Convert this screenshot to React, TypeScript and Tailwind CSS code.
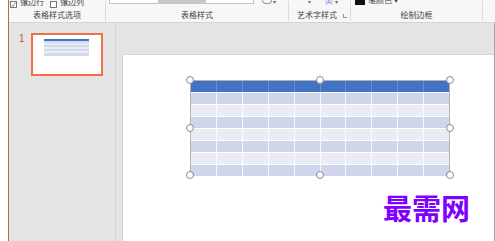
import React from "react";

const cols = Array.from({ length: 10 });
const rows = Array.from({ length: 7 });

function Handle({ className }: { className: string }) {
  return (
    <span
      className={`absolute w-[8px] h-[8px] rounded-full bg-white border border-[#8a8a8a] ${className}`}
    />
  );
}

export default function App() {
  return (
    <div
      className="w-[495px] h-[241px] overflow-hidden bg-white flex"
      style={{ fontFamily: '"Noto Sans CJK SC", "Noto Sans", sans-serif' }}
    >
      {/* left white strip */}
      <div className="w-[9px] h-full bg-white border-r border-[#c9604a]" />

      <div className="flex-1 flex flex-col">
        {/* ribbon */}
        <div className="h-[23px] bg-[#f7f7f7] border-b border-[#d4d4d4] flex text-[#444] text-[8px] overflow-hidden">
          <div className="w-[97px] flex flex-col border-r border-[#dcdcdc] my-[1px]">
            <div className="h-[9px] flex items-end gap-[3px] pl-[1px] -mt-[2px]">
              <span className="w-[7px] h-[7px] border border-[#777] bg-white text-[6px] leading-[5px] text-center">✓</span>
              <span>镶边行</span>
              <span className="w-[7px] h-[7px] border border-[#777] bg-white ml-[3px]" />
              <span>镶边列</span>
            </div>
            <div className="flex-1 flex items-center justify-center">表格样式选项</div>
          </div>

          <div className="w-[183px] flex flex-col border-r border-[#dcdcdc] my-[1px]">
            <div className="h-[9px] flex -mt-[1px]">
              <div className="ml-[3px] w-[145px] h-[4px] bg-white border-b border-x border-[#c6c6c6] flex justify-center">
                <div className="w-[48px] h-[3px] bg-[#c8c8c8]" />
              </div>
              <div className="ml-[8px] h-[4px] w-[10px] border-b border-x border-[#999] rounded-b-full" />
              <span className="ml-[1px] text-[6px] leading-[4px] text-[#666]">▾</span>
            </div>
            <div className="flex-1 flex items-center justify-center">表格样式</div>
          </div>

          <div className="w-[62px] flex flex-col border-r border-[#dcdcdc] my-[1px] relative">
            <div className="h-[9px] flex -mt-[1px] text-[6px] leading-[4px]">
              <span className="ml-[19px] text-[#777]">▾</span>
              <span className="ml-[14px] text-[#4a7cd0]">(A)</span>
              <span className="ml-[2px] text-[#666]">▾</span>
            </div>
            <div className="flex-1 flex items-center pl-[8px]">艺术字样式</div>
            <span className="absolute right-[3px] bottom-[3px] w-[4px] h-[4px] border-l border-b border-[#999]" />
          </div>

          <div className="w-[132px] flex flex-col border-r border-[#dcdcdc] my-[1px]">
            <div className="h-[9px] flex items-end -mt-[4px] pl-[4px] gap-[3px]">
              <div className="w-[10px] h-[5px] bg-[#111] mb-[1px]" />
              <span>笔颜色 ▾</span>
            </div>
            <div className="flex-1 flex items-center justify-center pt-[2px]">绘制边框</div>
          </div>
          <div className="flex-1" />
        </div>

        {/* body */}
        <div className="flex-1 flex bg-[#e4e4e4]">
          {/* thumbnails pane */}
          <div className="w-[107px] border-r border-[#d2d2d2] flex pt-[10px]">
            <span className="w-[22px] pl-[10px] text-[10px] leading-[12px] text-[#c8553a]" style={{ fontFamily: '"Liberation Sans", sans-serif' }}>
              1
            </span>
            <div className="w-[72px] h-[43px] border-2 border-[#f0704d] bg-white pt-[4px] pl-[11px]">
              <div className="w-[45px] h-[17px] bg-[linear-gradient(to_bottom,#4472c4_0,#4472c4_2px,#d3d8ec_2px,#d3d8ec_4px,#e9ebf5_4px,#e9ebf5_6px,#d3d8ec_6px,#d3d8ec_8px,#e9ebf5_8px,#e9ebf5_10px,#d3d8ec_10px,#d3d8ec_12px,#e9ebf5_12px,#e9ebf5_14px,#d3d8ec_14px)]" />
            </div>
          </div>

          {/* slide area */}
          <div className="flex-1 flex flex-col pl-[6px] pt-[31px] border-r border-[#a9a9a9]">
            <div className="flex-1 bg-white border-l border-t border-[#d6d6d6] relative pl-[67px] pt-[25px]">
              <div className="relative w-[260px] h-[95px] border border-[#b4b4b4]">
                <div className="flex h-[11px] bg-[#4472c4]">
                  {cols.map((_, i) => (
                    <div key={i} className="flex-1 border-r border-[#6a8ed0] last:border-r-0" />
                  ))}
                </div>
                {rows.map((_, r) => (
                  <div
                    key={r}
                    className={`flex h-[12px] border-t border-white ${r % 2 === 0 ? "bg-[#cfd5ea]" : "bg-[#e9ebf5]"}`}
                  >
                    {cols.map((_, i) => (
                      <div key={i} className="flex-1 border-r border-white/80 last:border-r-0" />
                    ))}
                  </div>
                ))}
                <Handle className="-left-[5px] -top-[5px]" />
                <Handle className="left-[125px] -top-[5px]" />
                <Handle className="-right-[5px] -top-[5px]" />
                <Handle className="-left-[5px] top-[43px]" />
                <Handle className="-right-[5px] top-[43px]" />
                <Handle className="-left-[5px] -bottom-[5px]" />
                <Handle className="left-[125px] -bottom-[5px]" />
                <Handle className="-right-[5px] -bottom-[5px]" />
              </div>

              <span className="absolute left-[260px] top-[134px] text-[29px] leading-[36px] font-bold text-[#8000ff]">
                最需网
              </span>
            </div>
          </div>
        </div>
      </div>
    </div>
  );
}
